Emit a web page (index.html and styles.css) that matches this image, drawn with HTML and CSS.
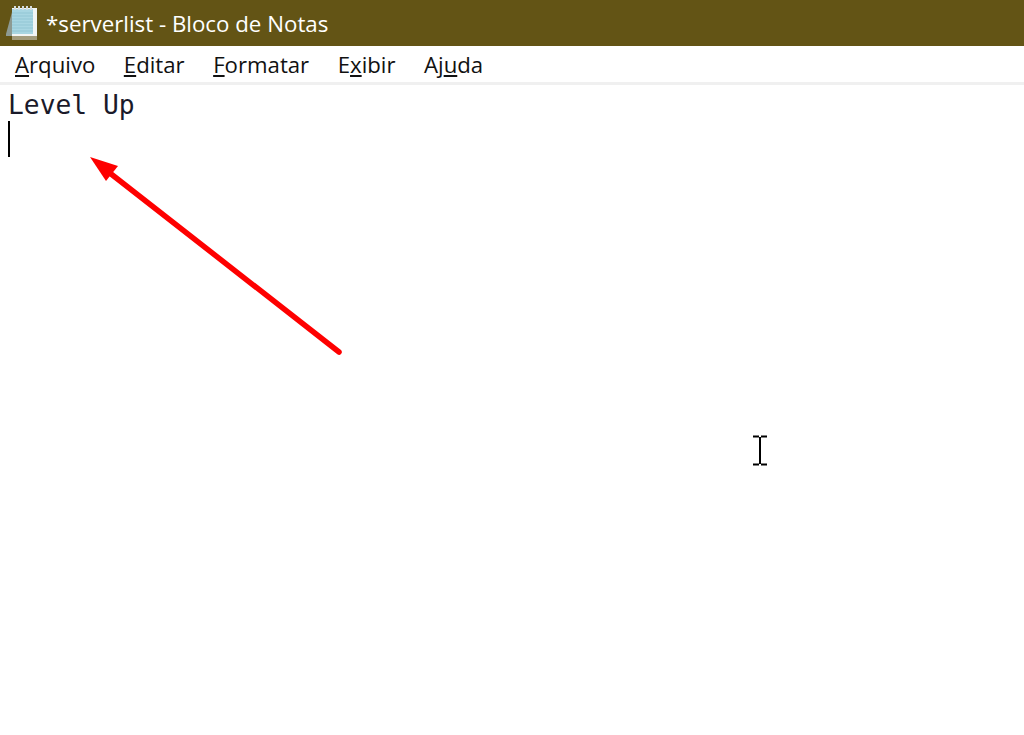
FILE: index.html
```html
<!DOCTYPE html>
<html lang="pt-BR">
<head>
    <meta charset="UTF-8">
    <meta name="viewport" content="width=device-width, initial-scale=1.0">
    <title>*serverlist - Bloco de Notas</title>
    <link rel="stylesheet" href="styles.css">
</head>
<body>
    <div class="titlebar">
        <svg class="app-icon" width="34" height="36" viewBox="0 0 34 36">
            <path d="M2 30 L8 8 L8 32 L2 32 Z" fill="#8d9a92"/>
            <rect x="8" y="31" width="25" height="5" fill="#a39c7c"/>
            <rect x="8" y="4" width="25" height="28" fill="#f2f5f4"/>
            <rect x="8" y="5" width="21" height="25" fill="#a8d6e2"/>
            <path d="M8 9h21M8 12h21M8 15h21M8 18h21M8 21h21M8 24h21M8 27h21" stroke="#92c6d4" stroke-width="1"/>
            <path d="M11 2v4M15 2v4M19 2v4M23 2v4M27 2v4" stroke="#d5dcdc" stroke-width="2"/>
        </svg>
        <span class="title-text">*serverlist - Bloco de Notas</span>
    </div>

    <div class="menubar">
        <span class="menu-item"><u>A</u>rquivo</span>
        <span class="menu-item"><u>E</u>ditar</span>
        <span class="menu-item"><u>F</u>ormatar</span>
        <span class="menu-item">E<u>x</u>ibir</span>
        <span class="menu-item">Aj<u>u</u>da</span>
    </div>

    <div class="editor">
        <div class="line">Level Up</div>
        <div class="caret"></div>
    </div>

    <!-- annotation arrow -->
    <svg class="arrow" width="1024" height="735" viewBox="0 0 1024 735">
        <line x1="339" y1="352" x2="106" y2="170" stroke="#fe0000" stroke-width="5.5" stroke-linecap="round"/>
        <path d="M90 157 L118 166 L106 181 Z" fill="#fe0000"/>
    </svg>

    <!-- mouse i-beam -->
    <svg class="ibeam" width="14" height="32" viewBox="0 0 14 32">
        <path d="M0 1.500h6M8 1.500h6M7 2v27M0 29.500h6M8 29.500h6" stroke="#000" stroke-width="2" fill="none"/>
    </svg>
</body>
</html>
```

FILE: styles.css
```css
body {
    margin: 0;
    height: 735px;
    overflow: hidden;
    background-color: #fff;
    position: relative;
}
.titlebar {
    height: 46px;
    background-color: #635415;
    display: flex;
    align-items: center;
    padding-left: 4px;
}
.app-icon {
    flex: none;
    margin-right: 8px;
    margin-top: -2px;
}
.title-text {
    color: #fff;
    font-family: "Open Sans", sans-serif;
    font-size: 22.3px;
}
.menubar {
    height: 36px;
    border-bottom: 3px solid #f0f0f0;
    display: flex;
    align-items: center;
    gap: 28.5px;
    padding-left: 15px;
    font-family: "Open Sans", sans-serif;
    font-size: 22.2px;
    color: #111;
}
.editor {
    padding: 4px 0 0 8px;
}
.line {
    font-family: "DejaVu Sans Mono", monospace;
    font-size: 26.3px;
    line-height: 32px;
    color: #1a1a2a;
}
.caret {
    width: 2px;
    height: 36px;
    background-color: #000;
}
.arrow {
    position: absolute;
    left: 0;
    top: 0;
}
.ibeam {
    position: absolute;
    left: 753px;
    top: 435px;
}
```
